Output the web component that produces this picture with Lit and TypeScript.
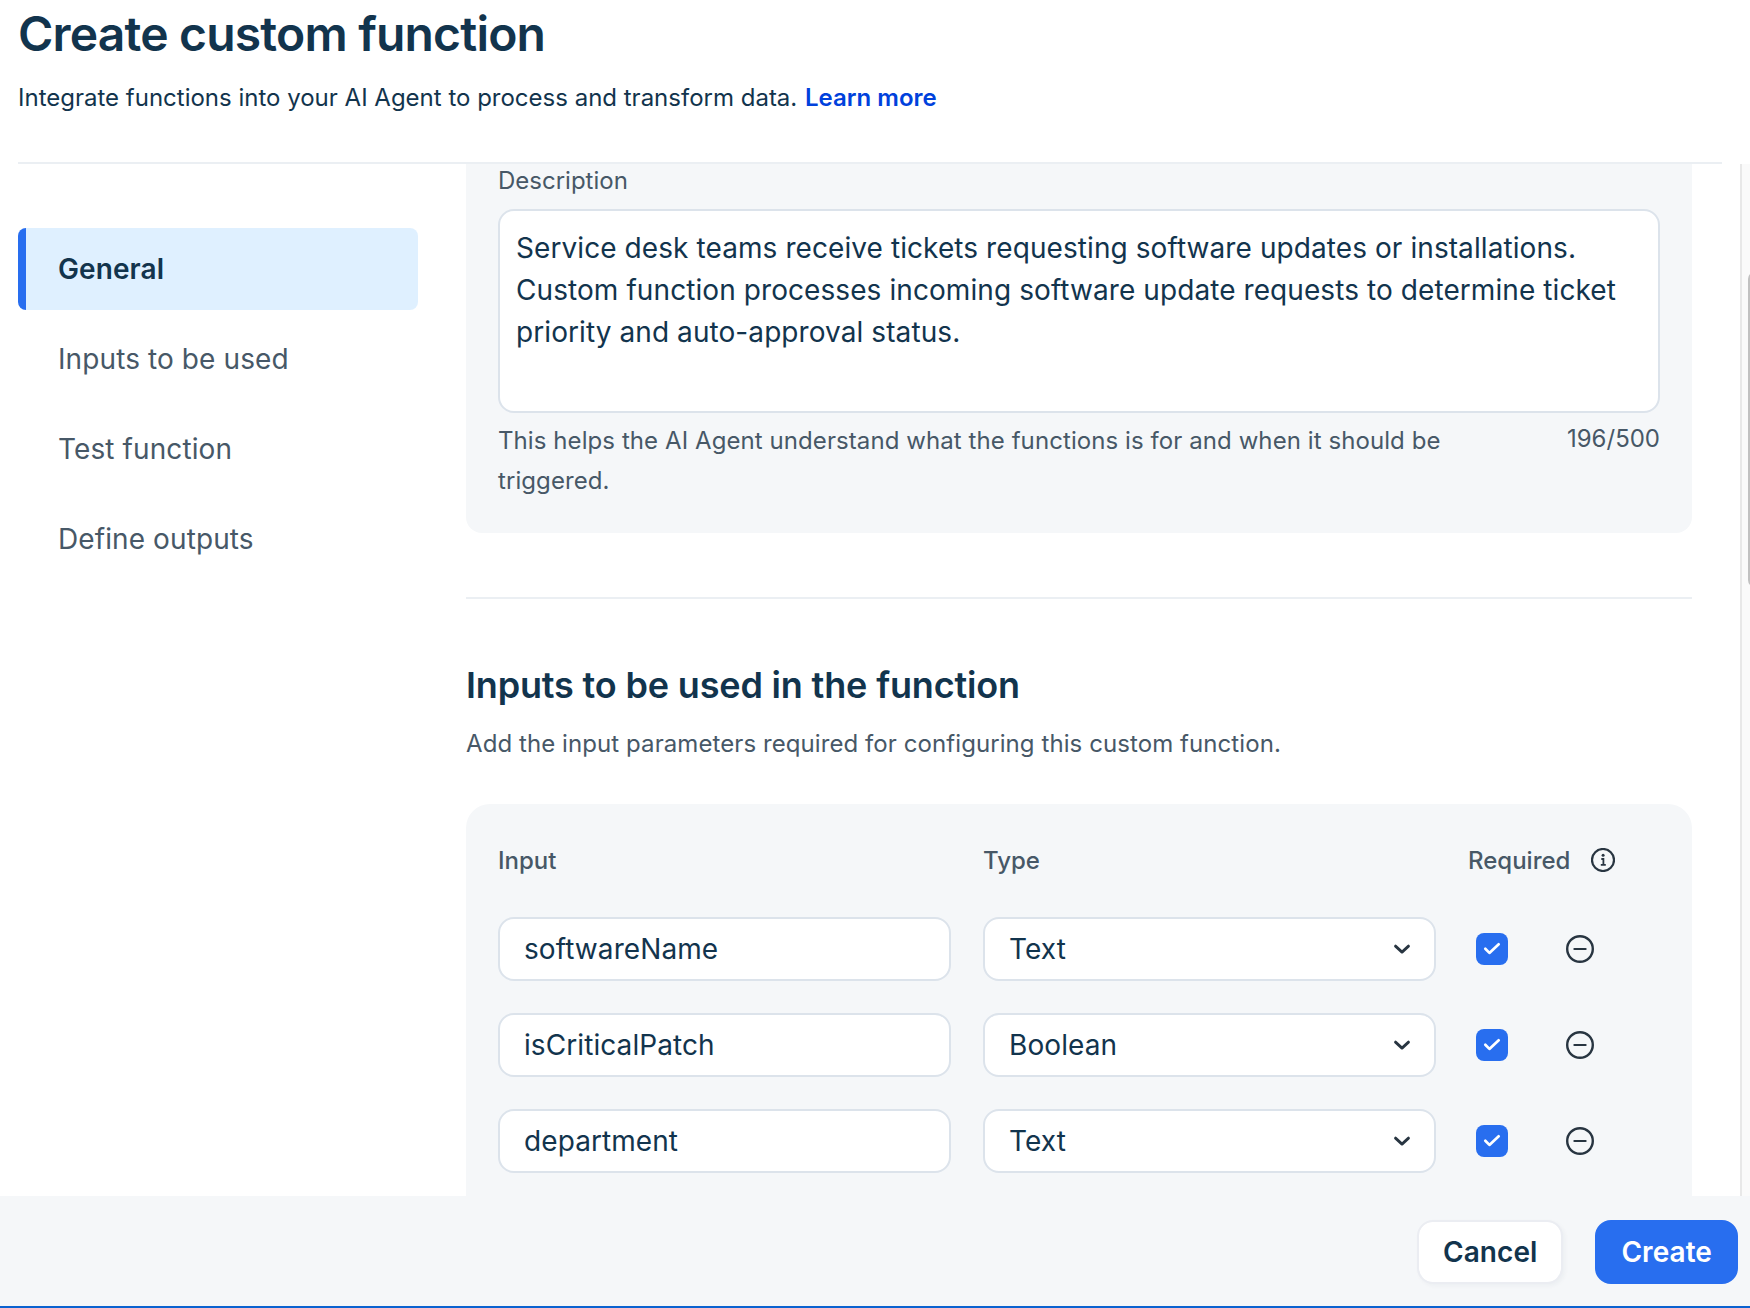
import { LitElement, html, css, svg } from "lit";
import { customElement, property, state } from "lit/decorators.js";
import { classMap } from "lit/directives/class-map.js";

const chevronIcon = svg`<path d="M5.5 9.1 12 15.1 18.5 9.1" fill="none" stroke="#283541" stroke-width="2.8" stroke-linecap="round" stroke-linejoin="round"/>`;

@customElement("input-row")
class InputRow extends LitElement {
  @property() name = "";
  @property() type = "";
  @property({ type: Boolean }) required = false;

  static styles = css`
    :host {
      display: flex;
      align-items: center;
      height: 64px;
    }
    .field {
      box-sizing: border-box;
      display: flex;
      align-items: center;
      justify-content: space-between;
      width: 453px;
      height: 64px;
      padding: 0 20px 0 24px;
      border: 2px solid #dce3eb;
      border-radius: 16px;
      background: #fff;
      color: #12344d;
      font-size: 28px;
      line-height: 34px;
      letter-spacing: 0.08px;
    }
    .select {
      margin-left: 32px;
    }
    svg {
      display: block;
      flex: none;
    }
    .check {
      width: 32px;
      height: 32px;
      margin-left: 40px;
      border-radius: 8px;
      background: #286eef;
    }
    .remove {
      margin-left: 58px;
    }
  `;

  render() {
    return html`
      <div class="field"><span>${this.name}</span></div>
      <div class="field select">
        <span>${this.type}</span>
        <svg width="24" height="24" viewBox="0 0 24 24">${chevronIcon}</svg>
      </div>
      <div class="check">
        ${this.required
          ? html`<svg width="32" height="32" viewBox="0 0 32 32">
              <path d="M9.3 15.8 13.4 19.9 22.7 11.3" fill="none" stroke="#fff" stroke-width="2.7" stroke-linecap="round" stroke-linejoin="round" />
            </svg>`
          : ""}
      </div>
      <svg class="remove" width="28" height="28" viewBox="0 0 28 28" fill="none" stroke="#283541">
        <circle cx="14" cy="14" r="12.8" stroke-width="2.4" />
        <path d="M8.4 14h11.2" stroke-width="2.2" stroke-linecap="round" />
      </svg>
    `;
  }
}

@customElement("app-root")
class AppRoot extends LitElement {
  @state() private active = 0;

  private sections = ["General", "Inputs to be used", "Test function", "Define outputs"];
  private inputs = [
    { name: "softwareName", type: "Text" },
    { name: "isCriticalPatch", type: "Boolean" },
    { name: "department", type: "Text" },
  ];

  static styles = css`
    :host {
      display: flex;
      flex-direction: column;
      box-sizing: border-box;
      width: 1750px;
      height: 1308px;
      overflow: hidden;
      background: #fff;
      color: #12344d;
      font-family: Inter, "Liberation Sans", sans-serif;
      font-size: 24px;
      line-height: 29px;
    }
    h1, h2, p {
      margin: 0;
    }
    .header {
      flex: none;
      box-sizing: border-box;
      height: 164px;
      margin: 0 28px 0 18px;
      padding-top: 4px;
      border-bottom: 2px solid #ebeff3;
    }
    h1 {
      font-size: 48px;
      line-height: 59px;
      font-weight: 600;
      letter-spacing: -0.81px;
    }
    .header p {
      margin-top: 20px;
    }
    .link {
      margin-left: 1px;
      color: #0041dc;
      font-weight: 600;
      text-decoration: none;
    }
    .body {
      display: flex;
      flex: none;
      height: 1032px;
      overflow: hidden;
    }
    .nav {
      display: flex;
      flex: none;
      flex-direction: column;
      gap: 8px;
      width: 400px;
      margin: 64px 48px 0 18px;
    }
    .item {
      box-sizing: border-box;
      height: 82px;
      padding: 24px 0 0 40px;
      border-radius: 8px;
      color: #475867;
      font-size: 28px;
      line-height: 34px;
      letter-spacing: 0.1px;
    }
    .item.on {
      background: linear-gradient(to right, #286eef 8px, #dff0ff 8px);
      color: #12344d;
      font-weight: 600;
    }
    .content {
      flex: none;
      width: 1226px;
      height: 1032px;
      overflow: hidden;
    }
    .muted {
      color: #475867;
    }
    .general {
      box-sizing: border-box;
      height: 369px;
      padding: 2px 32px 0;
      border-radius: 0 0 16px 16px;
      background: #f5f7f9;
    }
    .area {
      box-sizing: border-box;
      height: 204px;
      margin-top: 14px;
      padding: 16px;
      border: 2px solid #dce3eb;
      border-radius: 16px;
      background: #fff;
      color: #12344d;
      font-size: 28px;
      line-height: 42px;
      letter-spacing: 0.08px;
    }
    .hint {
      display: flex;
      justify-content: space-between;
    }
    .hint p {
      width: 970px;
      margin-top: 8px;
      line-height: 40px;
      letter-spacing: 0.08px;
    }
    .count {
      margin-top: 11px;
    }
    .rule {
      height: 2px;
      margin: 64px 0;
      background: #ebeff3;
    }
    h2 {
      font-size: 36px;
      line-height: 44px;
      font-weight: 600;
      letter-spacing: -0.165px;
    }
    .sub {
      margin-top: 22px;
      letter-spacing: 0.08px;
    }
    .inputs {
      box-sizing: border-box;
      height: 560px;
      margin-top: 46px;
      padding: 42px 32px;
      border-radius: 24px;
      background: #f5f7f9;
    }
    .head {
      display: grid;
      grid-template-columns: 485px 485px auto;
      height: 29px;
      font-weight: 500;
    }
    .req {
      display: flex;
      align-items: flex-start;
      gap: 21px;
    }
    .req svg {
      margin-top: 2px;
    }
    .rows {
      display: flex;
      flex-direction: column;
      gap: 32px;
      margin-top: 42px;
    }
    .track {
      box-sizing: border-box;
      flex: none;
      width: 10px;
      margin-left: 48px;
      padding: 108px 0 0 6px;
      border-left: 2px solid #e8e8e8;
      background: #fafafa;
      overflow: hidden;
    }
    .thumb {
      width: 14px;
      height: 315px;
      border-radius: 7px;
      background: #c1c1c1;
    }
    .footer {
      display: flex;
      flex: none;
      box-sizing: border-box;
      justify-content: flex-end;
      gap: 32px;
      height: 112px;
      padding: 24px 12px 0 0;
      border-bottom: 2px solid #0b62d0;
      background: #f5f7f9;
    }
    .btn {
      box-sizing: border-box;
      height: 64px;
      padding: 0 24px;
      border: 2px solid #ebedf2;
      border-radius: 16px;
      background: #fff;
      background-clip: padding-box;
      box-shadow: 2px 2px 4px rgba(18, 52, 77, 0.04);
      color: #12344d;
      font: 600 28px/34px Inter, "Liberation Sans", sans-serif;
      letter-spacing: 0.06px;
    }
    .btn.primary {
      border-color: #286eef;
      background: #286eef;
      box-shadow: none;
      color: #fff;
    }
  `;

  render() {
    return html`
      <header class="header">
        <h1>Create custom function</h1>
        <p>Integrate functions into your AI Agent to process and transform data. <a class="link">Learn more</a></p>
      </header>
      <div class="body">
        <nav class="nav">
          ${this.sections.map(
            (s, i) => html`<div class=${classMap({ item: true, on: i === this.active })} @click=${() => (this.active = i)}>${s}</div>`
          )}
        </nav>
        <main class="content">
          <section class="general">
            <div class="muted">Description</div>
            <div class="area">Service desk teams receive tickets requesting software updates or installations. Custom function processes incoming software update requests to determine ticket priority and auto-approval status.</div>
            <div class="hint muted">
              <p>This helps the AI Agent understand what the functions is for and when it should be triggered.</p>
              <span class="count">196/500</span>
            </div>
          </section>
          <div class="rule"></div>
          <h2>Inputs to be used in the function</h2>
          <p class="sub muted">Add the input parameters required for configuring this custom function.</p>
          <section class="inputs">
            <div class="head muted">
              <span>Input</span>
              <span>Type</span>
              <span class="req">
                Required
                <svg width="24" height="24" viewBox="0 0 24 24" fill="none" stroke="#283541">
                  <circle cx="12" cy="12" r="11" stroke-width="2.2" />
                  <path d="M10.3 11h2.1v5.6M9.8 16.9h5" stroke-width="1.8" />
                  <circle cx="12.1" cy="7.3" r="1.5" fill="#283541" stroke="none" />
                </svg>
              </span>
            </div>
            <div class="rows">
              ${this.inputs.map((r) => html`<input-row .name=${r.name} .type=${r.type} .required=${true}></input-row>`)}
            </div>
          </section>
        </main>
        <div class="track"><div class="thumb"></div></div>
      </div>
      <footer class="footer">
        <button class="btn">Cancel</button>
        <button class="btn primary">Create</button>
      </footer>
    `;
  }
}
